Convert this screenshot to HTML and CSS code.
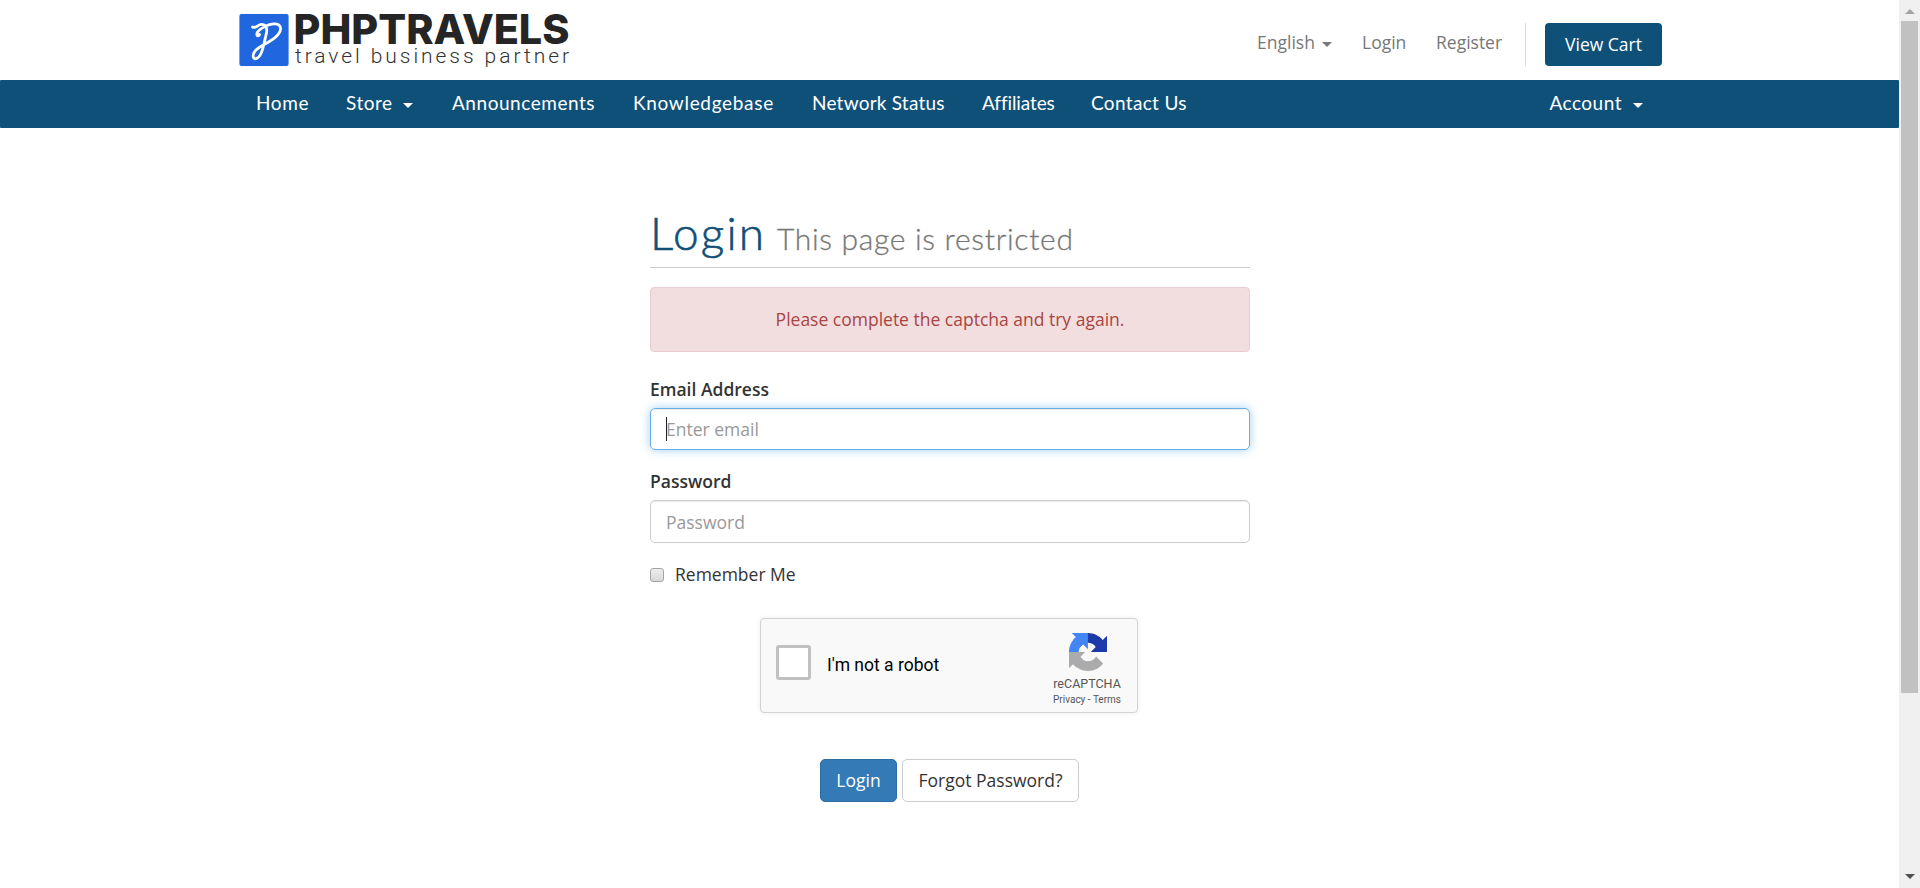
FILE: index.html
```
<!DOCTYPE html>
<html lang="en">
<head>
<meta charset="utf-8">
<title>Login - PHPTRAVELS</title>
<link rel="stylesheet" href="styles.css">
</head>
<body>
<div class="page">
  <header class="header">
    <div class="container header-row">
      <svg class="logo" width="334" height="56" viewBox="0 0 334 56" role="img" aria-label="PHPTRAVELS travel business partner">
        <rect x="0.4" y="2" width="49.2" height="52" rx="2" fill="#1f66df"/>
        <path d="M13.500 15C17 17 19 12 23 12.500C28 13 28.500 18 27 23C25.500 29 24.500 36 22 41.500C20 46 16 48.500 14.500 45.500C12.500 40 19 36 25 32.500C32 29 42 23 41.500 16C41 11 33 11 28 13.500C22 16 17 20 18 23C18.500 24.500 20 23.500 20.500 22.500" fill="none" stroke="#fff" stroke-width="2.800" stroke-linecap="round"/>
        <text class="logo-name" x="54.500" y="32.300" textLength="276" lengthAdjust="spacingAndGlyphs">PHPTRAVELS</text>
        <text class="logo-tag" x="56" y="51" textLength="274">travel business partner</text>
      </svg>
      <nav class="top-links">
        <a class="t-english">English<i class="caret"></i></a>
        <a class="t-login">Login</a>
        <a class="t-register">Register</a>
        <span class="cart-wrap"><a class="btn-cart">View Cart</a></span>
      </nav>
    </div>
  </header>
  <nav class="navbar">
    <div class="container nav-row">
      <a class="n-home">Home</a>
      <a class="n-store">Store<i class="caret"></i></a>
      <a class="n-ann">Announcements</a>
      <a class="n-kb">Knowledgebase</a>
      <a class="n-net">Network Status</a>
      <a class="n-aff">Affiliates</a>
      <a class="n-con">Contact Us</a>
      <a class="n-acc">Account<i class="caret"></i></a>
    </div>
  </nav>
  <main class="login">
    <h1 class="title"><span class="title-main">Login</span><small class="title-sub">This page is restricted</small></h1>
    <div class="alert">Please complete the captcha and try again.</div>
    <div class="label">Email Address</div>
    <div class="field focused"><i class="cursor"></i><span>Enter email</span></div>
    <div class="label label-pw">Password</div>
    <div class="field field-pw"><span>Password</span></div>
    <div class="remember"><i class="check"></i><span>Remember Me</span></div>
    <div class="captcha">
      <i class="captcha-box"></i>
      <span class="captcha-text">I'm not a robot</span>
      <div class="captcha-brand">
        <svg class="brand-icon" width="38" height="38" viewBox="0 0 64 64">
          <path fill="#1c3aa9" d="M64 31.955l-.033-1.370V4.687l-7.160 7.160C50.948 4.674 42.033.093 32.050.093c-10.400 0-19.622 4.960-25.458 12.640l11.736 11.860a15.550 15.550 0 0 1 4.754-5.334c2.050-1.600 4.952-2.906 8.968-2.906.485 0 .860.057 1.135.163 4.976.393 9.288 3.140 11.828 7.124l-8.307 8.307L64 31.953"/>
          <path fill="#4285f4" d="M31.862.094l-1.370.033H4.594l7.160 7.160C4.580 13.147 0 22.060 0 32.046c0 10.400 4.960 19.622 12.640 25.458L24.500 45.768a15.550 15.550 0 0 1-5.334-4.754c-1.600-2.050-2.906-4.952-2.906-8.968 0-.485.057-.860.163-1.135.393-4.976 3.140-9.288 7.124-11.828l8.307 8.307L31.860.095"/>
          <path fill="#ababab" d="M.001 32.045l.033 1.370v25.898l7.160-7.160c5.860 7.173 14.774 11.754 24.760 11.754 10.400 0 19.622-4.960 25.458-12.640l-11.736-11.860a15.550 15.550 0 0 1-4.754 5.334c-2.050 1.600-4.952 2.906-8.968 2.906-.485 0-.860-.057-1.135-.163-4.976-.393-9.288-3.140-11.828-7.124l8.307-8.307c-10.522.040-22.400.066-27.295-.005"/>
        </svg>
        <span class="brand-name">reCAPTCHA</span>
        <span class="brand-terms">Privacy - Terms</span>
      </div>
    </div>
    <div class="buttons">
      <a class="btn btn-primary">Login</a>
      <a class="btn btn-default">Forgot Password?</a>
    </div>
  </main>
</div>
<aside class="scrollbar">
  <i class="arrow-up"></i>
  <i class="thumb"></i>
  <i class="arrow-down"></i>
</aside>
</body>
</html>
```
FILE: styles.css
```
* { box-sizing: border-box; }
body {
  margin: 0;
  height: 888px;
  display: flex;
  overflow: hidden;
  background: #fff;
  color: #333;
  font: 17.5px/25px "Open Sans", sans-serif;
}
a, span, div { white-space: nowrap; }
.page { width: 1899px; height: 888px; }
.container { width: 1425px; margin-left: 237px; }
.header { height: 80px; }
.header-row { display: flex; justify-content: space-between; }
.logo { margin: 12px 0 0 2px; overflow: visible; }
.logo-name {
  font: 800 41px Inter, sans-serif;
  fill: #252525;
}
.logo-tag { font: 300 21px Roboto, sans-serif; fill: #333; }
.top-links { display: flex; color: #777; padding-top: 23px; }
.top-links > a { padding-top: 7px; }
.t-english { width: 105px; }
.t-login { width: 74px; }
.t-register { width: 89px; }
.caret {
  display: inline-block;
  border: 5px solid transparent;
  border-top-color: currentColor;
  border-bottom: 0;
  vertical-align: middle;
  margin-left: 7px;
}
.cart-wrap { border-left: 1px solid #ddd; height: 43px; padding-left: 19px; }
.btn-cart {
  display: block;
  width: 117px;
  height: 43px;
  border-radius: 4px;
  background: #0f5078;
  color: #fff;
  line-height: 43px;
  text-align: center;
}
.navbar { height: 48px; background: #0f5078; border-radius: 1px; }
.nav-row {
  display: flex;
  padding-left: 19px;
  color: #fff;
  font: 19px/46px Lato, sans-serif;
}
.nav-row .caret { margin-left: 11px; }
.n-home { width: 90px; letter-spacing: .6px; }
.n-store { width: 106px; letter-spacing: .5px; }
.n-ann { width: 181px; letter-spacing: .54px; }
.n-kb { width: 179px; letter-spacing: .68px; }
.n-net { width: 170px; letter-spacing: .22px; }
.n-aff { width: 109px; letter-spacing: -.1px; }
.n-con { letter-spacing: .34px; }
.n-acc { margin-left: auto; margin-right: 19px; letter-spacing: .5px; }
.login { width: 600px; margin: 80px 0 0 650px; }
.title {
  display: flex;
  align-items: baseline;
  height: 60px;
  margin: 0 0 19px;
  border-bottom: 1px solid #ccc;
  font: 300 45px/50px Lato, sans-serif;
  color: #0f5078;
}
.title-main { width: 127px; letter-spacing: 2.1px; font-size: 46px; -webkit-text-stroke: .6px #0f5078; }
.title-sub { font-size: 30px; color: #777; letter-spacing: .68px; -webkit-text-stroke: .3px #777; }
.alert {
  height: 65px;
  border: 1px solid #ebccd1;
  border-radius: 4px;
  background: #f2dede;
  color: #a94442;
  line-height: 63px;
  text-align: center;
}
.label { font-weight: 600; margin: 25px 0 6px; }
.label-pw { margin-top: 19px; }
.field {
  display: flex;
  height: 43px;
  padding: 8px 15px;
  border: 1px solid #ccc;
  border-radius: 5px;
  color: #999;
  box-shadow: inset 0 1px 1px rgba(0,0,0,.075);
}
.field-pw { padding-top: 9px; }
.focused {
  height: 42px;
  border-color: #66afe9;
  box-shadow: inset 0 1px 1px rgba(0,0,0,.075), 0 0 10px rgba(102,175,233,.6);
}
.cursor { width: 1px; height: 24px; margin-right: -1px; background: #222; }
.remember { display: flex; align-items: center; gap: 11px; margin-top: 19px; }
.check {
  width: 14px;
  height: 14px;
  border: 1px solid #a5a5a5;
  border-radius: 3px;
  background: linear-gradient(#eee, #d8d8d8);
}
.captcha {
  display: flex;
  width: 378px;
  height: 95px;
  margin: 31px 0 0 110px;
  border: 1px solid #d3d3d3;
  border-radius: 4px;
  background: #f9f9f9;
  box-shadow: 0 0 5px rgba(0,0,0,.08);
  font-family: Roboto, sans-serif;
}
.captcha-box {
  width: 35px;
  height: 35px;
  margin: 26px 16px 0 15px;
  border: 3px solid #c1c1c1;
  border-radius: 3px;
  background: #fff;
}
.captcha-text { margin-top: 34px; color: #000; }
.captcha-brand {
  display: flex;
  flex-direction: column;
  align-items: center;
  margin: 14px 16px 0 auto;
  color: #555;
}
.brand-icon { margin-left: 1px; }
.brand-name { font-size: 12.5px; line-height: 15px; margin-top: 5px; }
.brand-terms { font-size: 10px; line-height: 12px; margin-top: 3px; }
.buttons { display: flex; gap: 5px; margin: 46px 0 0 170px; }
.btn {
  width: 77px;
  height: 43px;
  border: 1px solid #2e6da4;
  border-radius: 5px;
  line-height: 41px;
  text-align: center;
}
.btn-primary { background: #337ab7; color: #fff; }
.btn-default { width: 177px; border-color: #ccc; }
.scrollbar {
  width: 21px;
  height: 888px;
  display: flex;
  flex-direction: column;
  align-items: center;
  background: #f0f0f0;
}
.arrow-up { border: 5px solid transparent; border-bottom-color: #a3a3a3; border-top: 0; margin-top: 9px; }
.thumb { width: 17px; height: 672px; margin-top: 7px; background: #c1c1c1; }
.arrow-down { border: 5px solid transparent; border-top-color: #505050; border-bottom: 0; margin-top: auto; margin-bottom: 9px; }
```
